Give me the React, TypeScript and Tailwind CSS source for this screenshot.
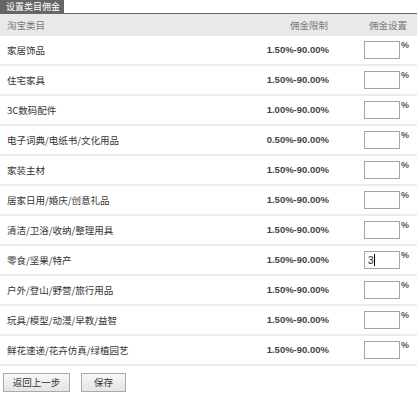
import React from "react";

const rows: { name: string; range: string; value?: string }[] = [
  { name: "家居饰品", range: "1.50%-90.00%" },
  { name: "住宅家具", range: "1.50%-90.00%" },
  { name: "3C数码配件", range: "1.00%-90.00%" },
  { name: "电子词典/电纸书/文化用品", range: "0.50%-90.00%" },
  { name: "家装主材", range: "1.50%-90.00%" },
  { name: "居家日用/婚庆/创意礼品", range: "1.50%-90.00%" },
  { name: "清洁/卫浴/收纳/整理用具", range: "1.50%-90.00%" },
  { name: "零食/坚果/特产", range: "1.50%-90.00%", value: "3" },
  { name: "户外/登山/野营/旅行用品", range: "1.50%-90.00%" },
  { name: "玩具/模型/动漫/早教/益智", range: "1.50%-90.00%" },
  { name: "鲜花速递/花卉仿真/绿植园艺", range: "1.50%-90.00%" },
];

const cjk = { fontFamily: '"Noto Sans CJK SC", "Noto Sans", sans-serif' };
const num = { fontFamily: '"Liberation Sans", Arial, sans-serif' };

export default function App() {
  return (
    <div className="w-[417px] h-[394px] bg-white overflow-hidden" style={cjk}>
      <div className="flex h-[14px] border-b border-[#666]">
        <div className="w-[64px] bg-[#666] text-white text-[9px] leading-[14px] pl-[6px]">
          设置类目佣金
        </div>
      </div>
      <div className="flex items-center h-[22px] bg-[#e9e9e9] text-[#7a7a7a] text-[9.5px]">
        <div className="flex-1 pl-[7px]">淘宝类目</div>
        <div className="w-[120px] text-right pr-[1px]">佣金限制</div>
        <div className="w-[88px] pl-[40px]">佣金设置</div>
      </div>
      {rows.map((r) => (
        <div
          key={r.name}
          className="flex items-center h-[30px] border-b-2 border-[#ececec] text-[9.5px] text-[#333]"
        >
          <div className="flex-1 pl-[7px]">{r.name}</div>
          <div className="w-[120px] text-right font-bold text-[9.5px] text-[#444]" style={num}>
            {r.range}
          </div>
          <div className="w-[88px] pl-[35px] flex items-start">
            <div className="w-[36px] h-[18px] border border-[#a5a5a5] bg-white flex items-center pl-[3px] text-[10px] text-[#222]" style={num}>
              {r.value ? (
                <>
                  <span>{r.value}</span>
                  <span className="inline-block w-px h-[12px] bg-black" />
                </>
              ) : null}
            </div>
            <span className="text-[9px] font-bold text-[#555] -mt-[2px] ml-[1px]" style={num}>%</span>
          </div>
        </div>
      ))}
      <div className="flex gap-[11px] pl-[3px] mt-[7px]">
        <button className="w-[67px] h-[19px] border border-[#aaa] bg-gradient-to-b from-[#f7f7f7] to-[#e4e4e4] text-[9.5px] text-[#333] leading-none" style={cjk}>
          返回上一步
        </button>
        <button className="w-[45px] h-[19px] border border-[#aaa] bg-gradient-to-b from-[#f7f7f7] to-[#e4e4e4] text-[9.5px] text-[#333] leading-none" style={cjk}>
          保存
        </button>
      </div>
    </div>
  );
}
